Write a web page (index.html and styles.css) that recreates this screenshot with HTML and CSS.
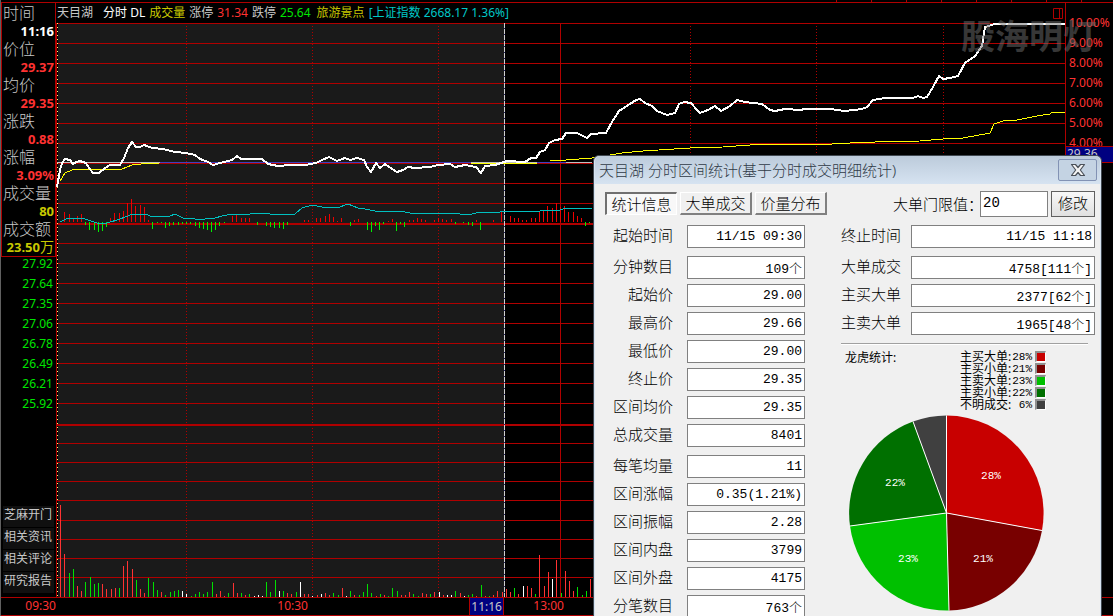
FILE: index.html
```html
<!DOCTYPE html>
<html lang="zh-CN">
<head>
<meta charset="utf-8">
<title>天目湖 分时</title>
<link rel="stylesheet" href="styles.css">
</head>
<body>
<div class="app">
  <div class="top-ruler"></div>
  <main class="board">
    <aside class="side">
      <dl class="quote">
        <dt>时间</dt><dd class="white">11:16</dd>
        <dt>价位</dt><dd class="red">29.37</dd>
        <dt>均价</dt><dd class="red">29.35</dd>
        <dt>涨跌</dt><dd class="red">0.88</dd>
        <dt>涨幅</dt><dd class="red">3.09%</dd>
        <dt>成交量</dt><dd class="gold">80</dd>
        <dt>成交额</dt><dd class="gold">23.50<span class="unit">万</span></dd>
      </dl>
      <ul class="prices">
        <li>27.92</li><li>27.64</li><li>27.35</li><li>27.06</li>
        <li>26.78</li><li>26.49</li><li>26.21</li><li>25.92</li>
      </ul>
      <nav class="links">
        <button type="button">芝麻开门</button>
        <button type="button">相关资讯</button>
        <button type="button">相关评论</button>
        <button type="button">研究报告</button>
      </nav>
    </aside>

    <header class="head">
      <span class="stock">天目湖</span>
      <span class="white">分时 DL</span>
      <span class="gold">成交量</span>
      <span>涨停</span>
      <span class="red">31.34</span>
      <span>跌停</span>
      <span class="lime">25.64</span>
      <span class="gold sector">旅游景点</span>
      <span class="cyan">[上证指数 2668.17 1.36%]</span>
      <svg class="split" viewBox="0 0 10 11" width="10" height="11"><path d="M.5.5h9v10h-9zM6.5.5v10" fill="none" stroke="#b00000"/></svg>
    </header>

    <svg class="chart" viewBox="56 23 1009 574" preserveAspectRatio="none">
      <rect x="58" y="23" width="446" height="574" fill="#1a1a1a"/>
      <g stroke="#b00000" fill="none">
        <path d="M56 23.5H1065M56 43.5H1065M56 63.5H1065M56 83.5H1065M56 103.5H1065M56 123.5H1065M56 143.5H1065M56 163.5H1065M56 183.5H1065M56 203.5H1065M56 243.5H1065M56 263.5H1065M56 283.5H1065M56 303.5H1065M56 323.5H1065M56 343.5H1065M56 363.5H1065M56 383.5H1065M56 403.5H1065M56 443.5H1065M56 462.5H1065M56 481.5H1065M56 500.5H1065M56 520.5H1065M56 539.5H1065M56 558.5H1065M56 577.5H1065"/>
        <path d="M56 224H1065M56 425H1065" stroke-width="2"/>
        <path d="M56.5 23V597M560.5 23V597"/>
        <path d="M186.5 26V597M312.5 26V597M438.5 26V597M690.5 26V597M816.5 26V597M943.5 26V597" stroke-dasharray="1 2"/>
      </g>
      <path d="M57.5 23V597" stroke="#ffff80" stroke-dasharray="1 3"/>
      <path d="M58 162.5H592" stroke="#4040c0"/>
      <path d="M57 162.5H160M471 162.5H537M566 162.5H592" stroke="#c0c0c0"/>
      <path d="M504.5 23V597" stroke="#202060"/>
      <path d="M504.5 23V597" stroke="#d0d0d0" stroke-dasharray="5 1"/>
      <g transform="translate(.5 0)" fill="none">
        <path stroke="#f00000" d="M64 222V212M69 222V214M73 222V218M77 222V216M81 222V214M110 222V218M114 222V213M119 222V213M123 222V211M127 222V203M131 222V199M135 222V206M140 222V205M144 222V207M148 222V220M232 222V216M236 222V214M241 222V218M245 222V218M249 222V218M304 222V220M308 222V220M316 222V218M320 222V218M325 222V216M329 222V214M333 222V217M337 222V221M341 222V218M354 222V220M358 222V219M388 222V221M392 222V219M409 222V220M413 222V220M417 222V218M421 222V219M425 222V220M434 222V220M438 222V218M442 222V219M446 222V220M451 222V219M476 222V220M493 222V220M501 222V211M510 222V216M514 222V218M518 222V218M522 222V220M526 222V220M531 222V218M535 222V218M539 222V212M543 222V211M547 222V206M552 222V208M556 222V203M560 222V207M564 222V206M568 222V212M573 222V212M577 222V216M581 222V218"/>
        <path stroke="#00f000" d="M85 222V225M89 222V230M94 222V230M98 222V232M102 222V231M106 222V227M152 222V229M157 222V223M161 222V223M165 222V228M169 222V226M173 222V225M178 222V225M182 222V224M186 222V224M190 222V224M195 222V226M199 222V228M203 222V229M207 222V230M211 222V232M215 222V230M219 222V226M224 222V223M257 222V225M266 222V226M270 222V227M274 222V228M279 222V228M283 222V229M287 222V225M350 222V226M367 222V230M371 222V232M375 222V226M379 222V230M383 222V224M396 222V231M400 222V224M404 222V227M455 222V224M463 222V223M468 222V225M472 222V226M480 222V230M585 222V226M589 222V223"/>
        <path stroke="#ff3232" d="M60 597V505M64 597V554M77 597V586M81 597V591M102 597V584M106 597V589M111 597V589M115 597V588M123 597V566M127 597V561M132 597V569M140 597V589M144 597V593M161 597V592M216 597V594M220 597V591M224 597V596M233 597V583M237 597V593M245 597V595M287 597V593M291 597V594M304 597V594M308 597V594M317 597V595M325 597V593M329 597V595M342 597V588M354 597V595M376 597V596M384 597V595M401 597V595M405 597V595M409 597V592M422 597V593M426 597V594M434 597V592M443 597V595M460 597V593M476 597V596M485 597V596M493 597V595M497 597V591M502 597V592M506 597V589M510 597V592M518 597V594M527 597V586M531 597V588M539 597V555M544 597V586M548 597V572M556 597V560M565 597V571M569 597V581M573 597V591M590 597V579"/>
        <path stroke="#00e000" d="M69 597V573M73 597V569M85 597V582M90 597V577M94 597V584M98 597V583M119 597V588M136 597V580M148 597V578M153 597V582M157 597V590M165 597V595M170 597V592M174 597V591M178 597V590M191 597V596M195 597V594M199 597V592M203 597V594M207 597V592M212 597V582M228 597V593M241 597V593M249 597V594M266 597V582M270 597V592M275 597V580M283 597V591M296 597V592M333 597V593M338 597V595M350 597V591M359 597V595M363 597V592M367 597V584M371 597V593M380 597V594M388 597V596M392 597V588M397 597V591M413 597V594M418 597V596M430 597V594M455 597V591M468 597V595M472 597V594M481 597V585M489 597V596M514 597V588M535 597V594M561 597V593M577 597V587M582 597V595M586 597V591"/>
        <path stroke="#fff" d="M182 597V591M186 597V594M254 597V596M258 597V595M262 597V596M279 597V591M300 597V582M312 597V596M321 597V594M346 597V596M439 597V592M447 597V595M451 597V595M464 597V596M523 597V586M552 597V579"/>
      </g>
      <g fill="none" shape-rendering="crispEdges">
        <polyline stroke="#00c0c0" points="60,222 68,218 85,219 97,223 107,223 120,219 133,214 146,214 150,216 170,216 175,214 183,218 195,219 205,219 215,218 222,216 232,214 250,214 258,213 270,214 295,214 302,208 312,205 322,207 337,208 348,204 358,208 365,209 375,211 395,211 405,212 415,214 430,213 445,213 460,214 468,215 480,212 500,212 510,211 525,212 540,211 560,210 566,208 575,209 592,208"/>
        <polyline stroke="#ffff00" points="60,181 65,173 72,170 82,169 122,169 132,165 145,163.500 159,163"/>
        <path stroke="#ffff00" d="M471 163.500H537"/>
        <polyline stroke="#ffff00" points="550,161 566,160 592,158 622,153 643,151 690,148 723,147 750,145 770,144 832,144 850,143 875,142 920,141 943,139 963,138 990,133 994,124 1003,121 1017,120 1027,118 1037,116 1050,114 1052,112 1065,112"/>
        <polyline stroke="#fff" stroke-width="2" points="57,187 60,170 62,163 65,159 70,160 73,164 76,162 80,161 86,163 89,168 93,173 99,173 105,168 110,165 120,165 124,158 128,148 132,142 136,147 140,147 144,145 152,148 163,149 175,152 186,153 195,155 200,159 208,162 213,165 220,163 232,160 237,156 241,159 262,159 268,164 278,166 290,165 305,165 316,163 322,160 329,157 337,161 345,158 350,160 357,158 364,160 367,167 371,172 376,163 380,168 385,164 389,167 397,172 403,170 408,167 415,168 430,167 438,165 450,164 455,167 465,165 476,167 481,173 485,166 495,165 501,163 507,161 525,162 531,158 536,158 540,152 545,150 549,143 555,140 562,139 566,133 577,133 583,136 587,138 591,134 606,133 612,122 619,111 630,104 636,100 640,99 645,103 652,106 657,111 667,115 675,113 679,104 684,102 691,103 697,110 700,113 708,110 715,106 721,111 730,106 737,100 745,102 762,104 770,110 775,111 785,109 800,110 805,109 815,109 830,109 845,111 862,109 867,107 873,100 885,98 913,98 918,96 923,98 927,97 933,87 939,76 943,79 950,78 958,76 965,63 975,56 982,46 985,27 995,24 1065,24"/>
      </g>
    </svg>

    <ul class="percents">
      <li>10.00%</li><li>9.00%</li><li>8.00%</li><li>7.00%</li><li>6.00%</li><li>5.00%</li><li class="cut">4.00%</li>
      <li class="now">29.36</li>
    </ul>

    <footer class="times">
      <span>09:30</span><span>10:30</span><span><b class="cursor-time">11:16</b></span><span>13:00</span>
    </footer>
  </main>

  <div class="watermark">股海明灯</div>

  <section class="dialog">
    <div class="titlebar">
      <h1>天目湖 分时区间统计(基于分时成交明细统计)</h1>
      <button class="close" type="button" aria-label="关闭">
        <svg viewBox="0 0 16 14" width="16" height="14"><path d="M1.500 1.500h4L8 4.500l2.500-3h4L10.300 7l4.200 5.500h-4L8 9.500l-2.500 3h-4L5.700 7z" fill="#f4f4f4" stroke="#4a5058" stroke-width="1.200" stroke-linejoin="round"/></svg>
      </button>
    </div>
    <div class="panel">
      <div class="toolbar">
        <button class="tab active" type="button">统计信息</button>
        <button class="tab" type="button">大单成交</button>
        <button class="tab" type="button">价量分布</button>
        <label class="limit-label" for="limit">大单门限值：</label>
        <input class="limit" id="limit" value="20">
        <button class="modify" type="button">修改</button>
      </div>
      <div class="columns">
        <div class="fields">
          <div class="group">
            <div class="field"><label for="a1">起始时间</label><input id="a1" readonly value="11/15 09:30"></div>
          </div>
          <div class="group">
            <div class="field"><label for="a2">分钟数目</label><input id="a2" readonly value="109个"></div>
            <div class="field"><label for="a3">起始价</label><input id="a3" readonly value="29.00"></div>
            <div class="field"><label for="a4">最高价</label><input id="a4" readonly value="29.66"></div>
            <div class="field"><label for="a5">最低价</label><input id="a5" readonly value="29.00"></div>
            <div class="field"><label for="a6">终止价</label><input id="a6" readonly value="29.35"></div>
            <div class="field"><label for="a7">区间均价</label><input id="a7" readonly value="29.35"></div>
            <div class="field"><label for="a8">总成交量</label><input id="a8" readonly value="8401"></div>
          </div>
          <div class="group">
            <div class="field"><label for="a9">每笔均量</label><input id="a9" readonly value="11"></div>
            <div class="field"><label for="a10">区间涨幅</label><input id="a10" readonly value="0.35(1.21%)"></div>
            <div class="field"><label for="a11">区间振幅</label><input id="a11" readonly value="2.28"></div>
            <div class="field"><label for="a12">区间内盘</label><input id="a12" readonly value="3799"></div>
            <div class="field"><label for="a13">区间外盘</label><input id="a13" readonly value="4175"></div>
            <div class="field"><label for="a14">分笔数目</label><input id="a14" readonly value="763个"></div>
          </div>
        </div>
        <div class="right">
          <div class="fields wide">
            <div class="group">
              <div class="field"><label for="b1">终止时间</label><input id="b1" readonly value="11/15 11:18"></div>
            </div>
            <div class="group">
              <div class="field"><label for="b2">大单成交</label><input id="b2" readonly value="4758[111个]"></div>
              <div class="field"><label for="b3">主买大单</label><input id="b3" readonly value="2377[62个]"></div>
              <div class="field"><label for="b4">主卖大单</label><input id="b4" readonly value="1965[48个]"></div>
            </div>
          </div>
          <hr class="rule">
          <div class="summary">
            <span class="caption">龙虎统计:</span>
            <ul class="legend">
              <li><span>主买大单:</span><span class="share">28%</span><i class="swatch buy-big"></i></li>
              <li><span>主买小单:</span><span class="share">21%</span><i class="swatch buy-small"></i></li>
              <li><span>主卖大单:</span><span class="share">23%</span><i class="swatch sell-big"></i></li>
              <li><span>主卖小单:</span><span class="share">22%</span><i class="swatch sell-small"></i></li>
              <li><span>不明成交:</span><span class="share">6%</span><i class="swatch unknown"></i></li>
            </ul>
          </div>
          <svg class="pie" viewBox="0 0 196 196" width="196" height="196">
            <path fill="#c80000" d="M98.500 98V.5A97.500 97.500 0 0 1 194 115.500z"/>
            <path fill="#780000" d="M98.500 98L194 115.500A97.500 97.500 0 0 1 101 195.500z"/>
            <path fill="#00c000" d="M98.500 98L101 195.500A97.500 97.500 0 0 1 2 111z"/>
            <path fill="#007000" d="M98.500 98L2 111A97.500 97.500 0 0 1 65 6.500z"/>
            <path fill="#404040" d="M98.500 98L65 6.500A97.500 97.500 0 0 1 98.500 .5z"/>
            <path d="M98.500 .5V98L194 115.500M98.500 98L101 195.500M98.500 98L2 111M98.500 98L65 6.500" fill="none" stroke="#fff"/>
            <text x="143" y="64">28%</text>
            <text x="135" y="147">21%</text>
            <text x="60" y="147">23%</text>
            <text x="47" y="71">22%</text>
          </svg>
        </div>
      </div>
    </div>
  </section>
</div>
</body>
</html>
```

FILE: styles.css
```css
* { box-sizing: border-box; }

body {
  margin: 0;
  background: #000;
  color: #c8c8c8;
  font: 400 12px/14px "Noto Sans", "Noto Sans CJK SC", sans-serif;
}

ul, dl, dd, h1 { margin: 0; padding: 0; }
ul { list-style: none; }
button, input { font: inherit; color: inherit; }

.white { color: #fff; }
.red { color: #ff3232; }
.gold { color: #c8c800; }
.lime { color: #00e600; }
.cyan { color: #00c8c8; }

.app {
  position: relative;
  display: flex;
  flex-direction: column;
  height: 100vh;
  overflow: hidden;
  border-left: 1px solid #606060;
}

.top-ruler {
  height: 3px;
  flex: none;
  background: repeating-linear-gradient(to right, #b00000 0 1px, transparent 1px 35px) right top / 277px 2px no-repeat;
  border-bottom: 1px solid #b00000;
}

.board {
  flex: 1;
  min-height: 0;
  display: grid;
  grid-template-columns: 55px 1fr 48px;
  grid-template-rows: 20px 1fr 19px;
}

/* left quote column */
.side {
  grid-row: 1 / 3;
  display: flex;
  flex-direction: column;
  min-height: 0;
}

.quote {
  border: 1px solid #b00000;
  border-top: 0;
  padding: 1px 1px 0;
}

.quote dt { font-size: 16px; font-weight: 300; line-height: 18px; }

.quote dd {
  font-size: 13px;
  font-weight: 700;
  line-height: 18px;
  text-align: right;
  white-space: nowrap;
}

.quote .unit { font-size: 14px; font-weight: 400; }

.prices {
  display: flex;
  flex-direction: column;
  gap: 6px;
  padding-right: 3px;
  color: #00e600;
  text-align: right;
}

.links {
  display: flex;
  flex-direction: column;
  gap: 1px;
  margin-top: auto;
  padding: 0 2px 4px;
}

.links button {
  height: 21px;
  padding: 0 1px 4px 0;
  border: 0;
  background: #101010;
  line-height: 16px;
  white-space: nowrap;
}

/* heading line */
.head {
  grid-column: 2;
  display: flex;
  align-items: center;
  gap: 4px;
  padding: 0 2px 0 1px;
  white-space: nowrap;
}

.head .stock { margin-right: 6px; }
.head .sector { margin-left: 2px; }
.head .split { margin-left: auto; }

.chart {
  grid-column: 2;
  grid-row: 2;
  display: block;
  width: 100%;
  height: 100%;
  min-height: 0;
}

/* right scale */
.percents {
  grid-column: 3;
  grid-row: 1 / 3;
  padding-top: 10px;
  border-left: 1px solid #b00000;
  color: #ff3232;
  line-height: 20px;
}

.percents li { height: 20px; padding-left: 3px; }
.percents .cut { height: 13px; overflow: hidden; }

.percents .now {
  height: 17px;
  padding-left: 1px;
  border: solid #b00000;
  border-width: 1px 0;
  background: #000080;
  color: #c8c8c8;
  line-height: 14px;
}

.times {
  grid-column: 1 / -1;
  display: grid;
  grid-template-columns: 55px 252fr 196fr 60fr 501fr 48px;
  border: solid #b00000;
  border-width: 1px 0;
  color: #ff3232;
  line-height: 16px;
  text-align: right;
}

.cursor-time {
  display: inline-block;
  padding: 0 1px;
  border: solid #b00000;
  border-width: 0 1px;
  background: #000080;
  color: #c8c8c8;
  font-weight: 400;
  line-height: 17px;
}

.watermark {
  position: absolute;
  top: 14px;
  right: 16px;
  color: rgba(110, 110, 110, .5);
  font-size: 34px;
  font-weight: 700;
  line-height: 44px;
}

/* statistics window */
.dialog {
  position: absolute;
  top: 155px;
  right: 11px;
  width: 509px;
  padding: 0 1px 2px;
  border: 1px solid #404850;
  border-radius: 6px 6px 0 0;
  background: #d6e3f1;
  color: #000;
  font-size: 15px;
  font-weight: 300;
}

.titlebar {
  display: flex;
  justify-content: space-between;
  align-items: center;
  height: 28px;
  padding: 0 3px 0 4px;
  border-radius: 5px 5px 0 0;
  background: linear-gradient(#bccbdb, #d6e3f1);
}

.titlebar h1 {
  color: #303a46;
  font-size: 15px;
  font-weight: 300;
  line-height: 24px;
  white-space: nowrap;
}

.close {
  display: grid;
  place-items: center;
  width: 39px;
  height: 22px;
  padding: 0;
  border: 1px solid #8292b4;
  border-radius: 2px;
  background: #c4d3e3;
}

.panel {
  padding: 6px 5px 10px 10px;
  background: #f0f0f0;
}

.toolbar {
  display: flex;
  align-items: center;
  gap: 3px;
  height: 27px;
  white-space: nowrap;
}

.tab {
  width: 72px;
  height: 23px;
  padding: 0;
  border: solid;
  border-width: 1px 2px 2px 1px;
  border-color: #fff #808080 #808080 #fff;
  background: #f0f0f0;
  line-height: 18px;
}

.tab.active {
  border-width: 2px 1px 1px 2px;
  border-color: #707070 #fff #fff #707070;
  background: #f8f8f8;
}

.limit-label { margin: 0 -6px 0 auto; }

.limit {
  width: 68px;
  height: 26px;
  padding: 0 2px 2px;
  border: 1px solid #808080;
  border-radius: 0;
  font: 14px "Liberation Mono", monospace;
}

.modify {
  width: 44px;
  height: 26px;
  padding: 0 0 2px;
  border: 1px solid #606060;
  background: linear-gradient(#f8f8f8, #e0e0e0);
}

.columns {
  display: grid;
  grid-template-columns: 192px 1fr;
  gap: 36px;
  padding: 8px 0 0 8px;
}

.fields { display: flex; flex-direction: column; gap: 8px; }
.group { display: flex; flex-direction: column; gap: 5px; }

.field {
  display: grid;
  grid-template-columns: 60px 1fr;
  gap: 14px;
  align-items: start;
}

.wide .field { gap: 10px; }

.field label { text-align: right; line-height: 20px; white-space: nowrap; }

.field input {
  width: 100%;
  min-width: 0;
  height: 23px;
  padding: 0 2px 1px;
  border: 1px solid #808080;
  border-radius: 0;
  background: #fff;
  font: 300 13px "Liberation Mono", "Noto Sans CJK SC", monospace;
  text-align: right;
}

.rule {
  height: 2px;
  margin: 8px 7px 0 0;
  border: 0;
  border-top: 1px solid #a0a0a0;
  background: #fff;
}

.summary {
  display: flex;
  justify-content: space-between;
  margin-top: 6px;
  padding: 0 49px 0 4px;
  font-size: 12px;
  font-weight: 400;
  line-height: 12px;
}

.caption { padding-top: 1px; }

.legend li {
  display: grid;
  grid-template-columns: 52px 20px 14px;
  height: 12px;
}

.share {
  font: 11px/12px "Liberation Mono", monospace;
  text-align: right;
}

.swatch {
  justify-self: end;
  width: 11px;
  height: 11px;
  border: solid;
  border-width: 2px 1px 1px 2px;
  border-color: #909090 #fff #fff #909090;
}

.buy-big { background: #c80000; }
.buy-small { background: #780000; }
.sell-big { background: #00c000; }
.sell-small { background: #007000; }
.unknown { background: #404040; }

.pie {
  display: block;
  margin: 4px 0 0 7px;
}

.pie text {
  fill: #fff;
  font: 11px "Liberation Mono", monospace;
  text-anchor: middle;
}
```
